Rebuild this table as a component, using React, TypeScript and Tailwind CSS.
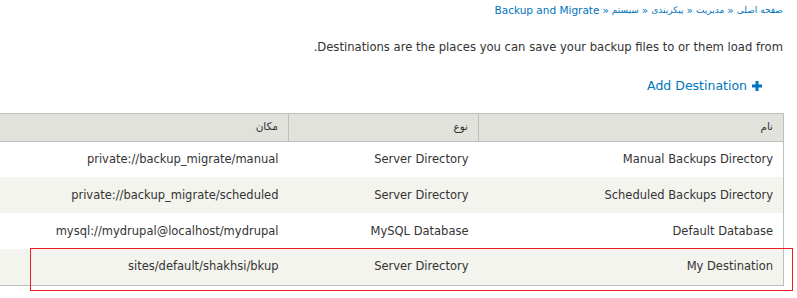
import React from 'react';

const rows = [
  { name: 'Manual Backups Directory', type: 'Server Directory', location: 'private://backup_migrate/manual' },
  { name: 'Scheduled Backups Directory', type: 'Server Directory', location: 'private://backup_migrate/scheduled' },
  { name: 'Default Database', type: 'MySQL Database', location: 'mysql://mydrupal@localhost/mydrupal' },
  { name: 'My Destination', type: 'Server Directory', location: 'sites/default/shakhsi/bkup' },
];

const crumbs = ['صفحه اصلی', 'مدیریت', 'پیکربندی', 'سیستم'];

const App: React.FC = () => {
  return (
    <div
      dir="rtl"
      className="relative w-[797px] h-[298px] overflow-hidden bg-white text-[#333] font-['DejaVu_Sans',sans-serif]"
    >
      {/* Breadcrumb */}
      <div className="flex items-center h-[20px] pr-[14px] pt-[1px] text-[#0074bd]">
        {crumbs.map((c) => (
          <React.Fragment key={c}>
            <a href="#" className="text-[9px] hover:underline">{c}</a>
            <span dir="ltr" className="mx-[3px] text-[10.5px]">»</span>
          </React.Fragment>
        ))}
        <a href="#" className="text-[10.5px] hover:underline">Backup and Migrate</a>
      </div>

      {/* Description */}
      <p className="mt-[19px] pr-[14px] text-[11.6px] leading-[16px]">
        Destinations are the places you can save your backup files to or them load from.
      </p>

      {/* Action link */}
      <div className="mt-[22px] pr-[35px] flex">
        <a href="#" className="flex items-center gap-[5px] text-[12.5px] text-[#0074bd]">
          <svg width="10" height="10" viewBox="0 0 10 10" className="shrink-0">
            <path d="M3.5 0h3v3.5H10v3H6.5V10h-3V6.5H0v-3h3.5z" fill="#0074bd" />
          </svg>
          <span>Add Destination</span>
        </a>
      </div>

      {/* Table */}
      <div className="mt-[17px] mr-[13px] flex">
        <table className="border-collapse shrink-0 text-[11.5px] border border-[#bebfb9]">
          <thead>
            <tr className="bg-[#e1e2dc] h-[28px]">
              <th className="w-[305px] pr-[10px] text-right font-normal text-[10.5px] border border-[#bebfb9]">نام</th>
              <th className="w-[190px] pr-[10px] text-right font-normal text-[10.5px] border border-[#bebfb9]">نوع</th>
              <th className="w-[340px] pr-[10px] text-right font-normal text-[10.5px] border border-[#bebfb9]">مکان</th>
            </tr>
          </thead>
          <tbody>
            {rows.map((r, i) => (
              <tr key={r.name} className={`h-[36px] ${i % 2 === 1 ? 'bg-[#f3f4ee]' : 'bg-white'}`}>
                <td className="pr-[10px] text-right">{r.name}</td>
                <td className="pr-[10px] text-right">{r.type}</td>
                <td className="pr-[10px] text-right">{r.location}</td>
              </tr>
            ))}
          </tbody>
        </table>
      </div>

      {/* Highlight around the last row */}
      <div className="absolute left-[30px] top-[248px] w-[763px] h-[43px] border border-[#ed1c24] pointer-events-none" />
    </div>
  );
};

export default App;
